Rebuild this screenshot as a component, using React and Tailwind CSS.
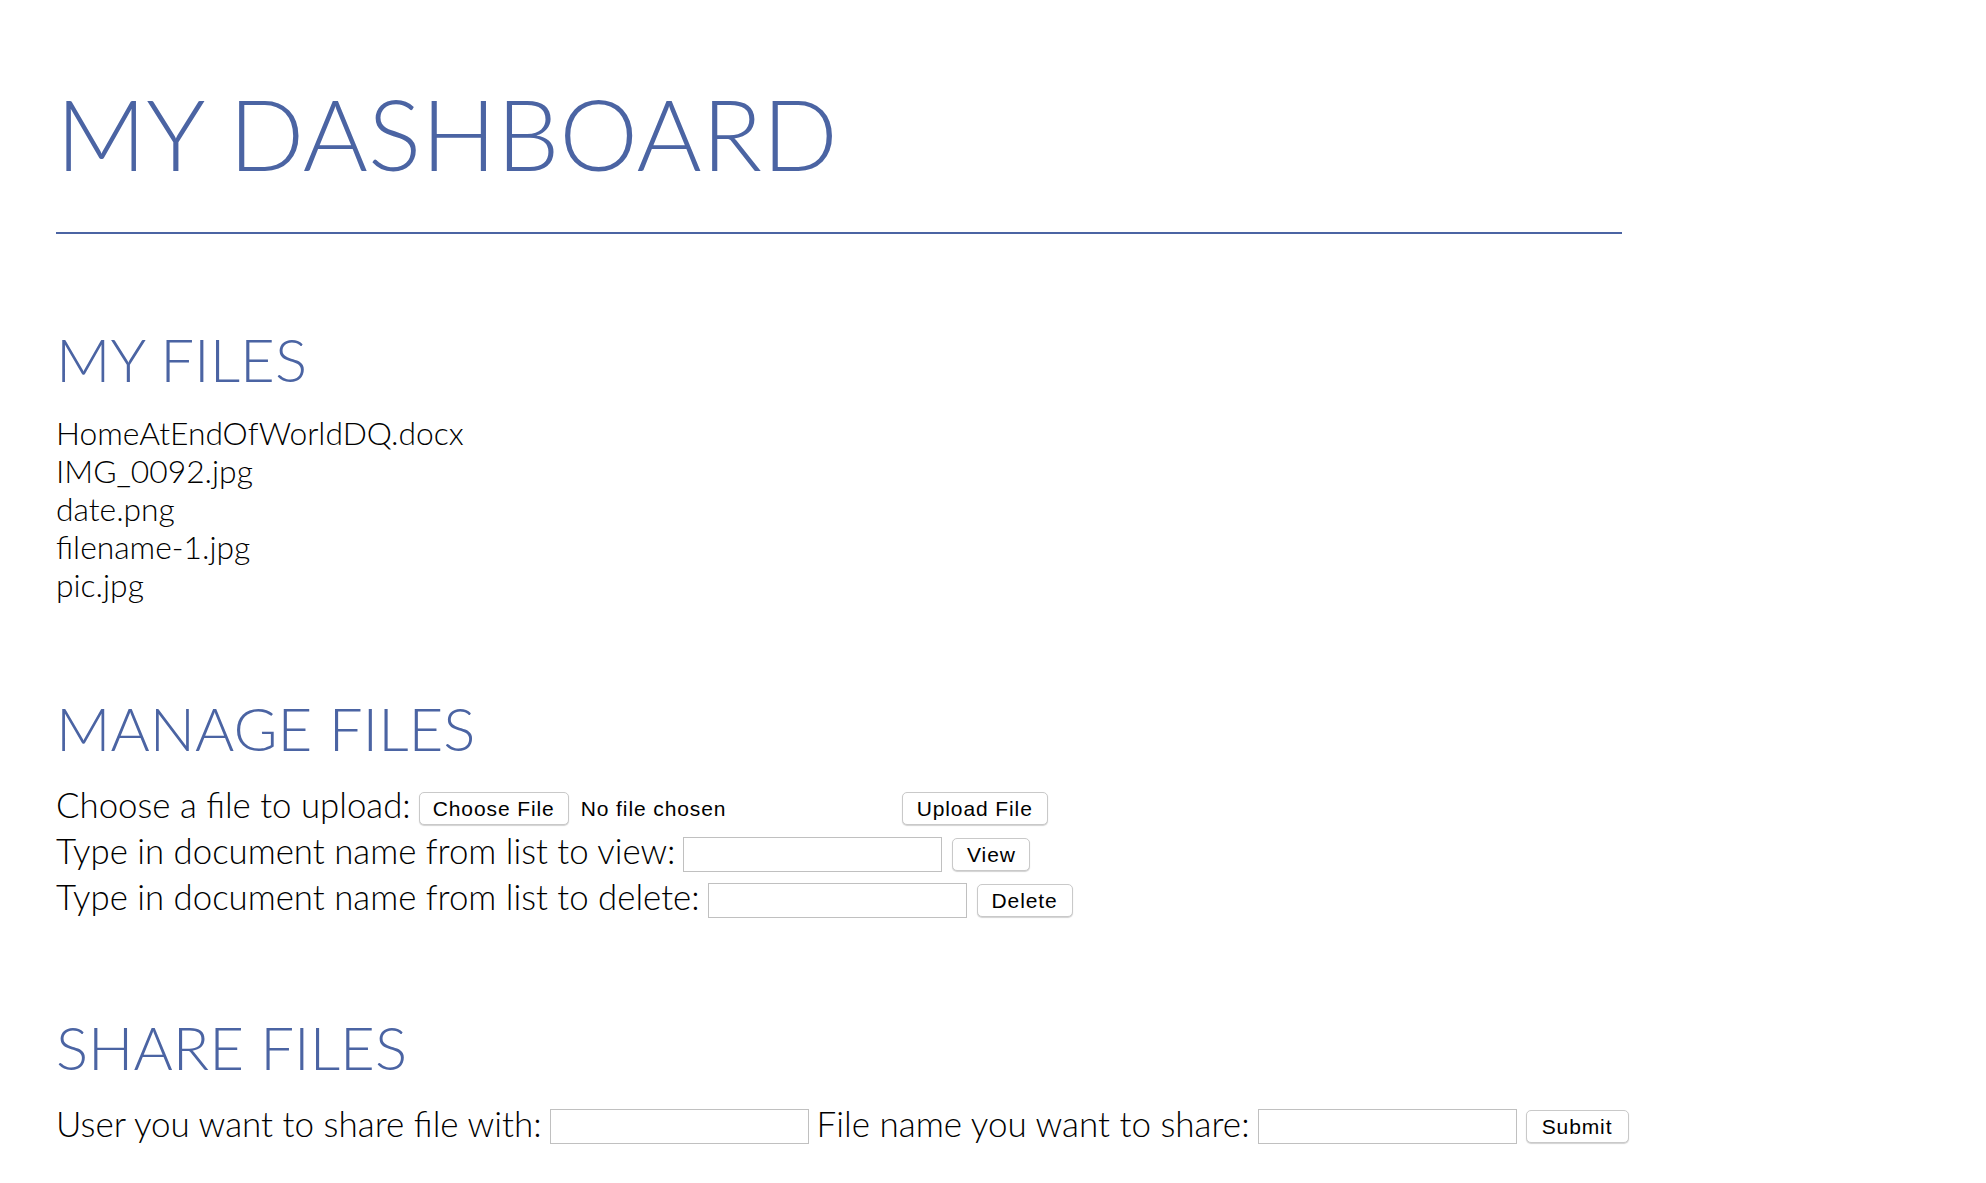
const files = [
  'HomeAtEndOfWorldDQ.docx',
  'IMG_0092.jpg',
  'date.png',
  'filename-1.jpg',
  'pic.jpg',
];

const lato = { fontFamily: 'Lato, "Open Sans", sans-serif' };

const Btn = ({ children, className = '' }) => (
  <button
    type="button"
    className={`h-[33px] shrink-0 rounded-[5px] border border-[#c9c9c9] bg-white text-center font-['Liberation_Sans',Arial,sans-serif] text-[21px] leading-none tracking-[0.9px] text-black shadow-[0_1px_1px_rgba(0,0,0,0.18)] ${className}`}
  >
    {children}
  </button>
);

const Field = ({ className = '' }) => (
  <input type="text" className={`h-[35px] w-[259px] shrink-0 border border-[#c0c0c0] bg-white outline-none ${className}`} />
);

const Label = ({ children, className = 'text-[34.8px]' }) => (
  <span className={`mb-[8px] shrink-0 whitespace-pre font-light leading-[40px] text-black ${className}`}>{children}</span>
);

const App = () => {
  return (
    <div className="min-h-screen bg-white pl-[56px] pt-[83px]" style={lato}>
      <div className="w-[1566px]">
        <h1 className="text-[99.5px] font-light leading-none text-[#4b64a3]">MY DASHBOARD</h1>
        <hr className="mt-[49px] h-[2px] border-0 bg-[#4b64a3]" />

        {/* My files */}
        <h2 className="mt-[95px] text-[60px] font-light leading-none text-[#4b64a3]">MY FILES</h2>
        <ul className="mt-[25px] text-[31.8px] font-light leading-[38px] text-black">
          {files.map((f) => (
            <li key={f}>{f}</li>
          ))}
        </ul>

        {/* Manage files */}
        <h2 className="mt-[94px] text-[60px] font-light leading-none text-[#4b64a3]">MANAGE FILES</h2>
        <div className="mt-[28px]">
          <div className="flex h-[46px] items-center">
            <Label>Choose a file to upload:</Label>
            <div className="ml-[8px] flex w-[483px] shrink-0 items-center">
              <Btn className="w-[150px]">Choose File</Btn>
              <span className="ml-[12px] font-['Liberation_Sans',Arial,sans-serif] text-[21px] tracking-[0.9px] text-black">
                No file chosen
              </span>
            </div>
            <Btn className="w-[146px]">Upload File</Btn>
          </div>
          <div className="flex h-[46px] items-center">
            <Label>Type in document name from list to view:</Label>
            <Field className="ml-[8px]" />
            <Btn className="ml-[10px] w-[78px]">View</Btn>
          </div>
          <div className="flex h-[46px] items-center">
            <Label>Type in document name from list to delete:</Label>
            <Field className="ml-[8px]" />
            <Btn className="ml-[10px] w-[96px]">Delete</Btn>
          </div>
        </div>

        {/* Share files */}
        <h2 className="mt-[93px] text-[60px] font-light leading-none text-[#4b64a3]">SHARE FILES</h2>
        <div className="mt-[27px] flex h-[46px] items-center">
          <Label className="text-[35px]">User you want to share file with:</Label>
          <Field className="ml-[8px]" />
          <Label className="ml-[8px] text-[35px]">File name you want to share:</Label>
          <Field className="ml-[8px]" />
          <Btn className="ml-[9px] w-[103px]">Submit</Btn>
        </div>
      </div>
    </div>
  );
};

export default App;
